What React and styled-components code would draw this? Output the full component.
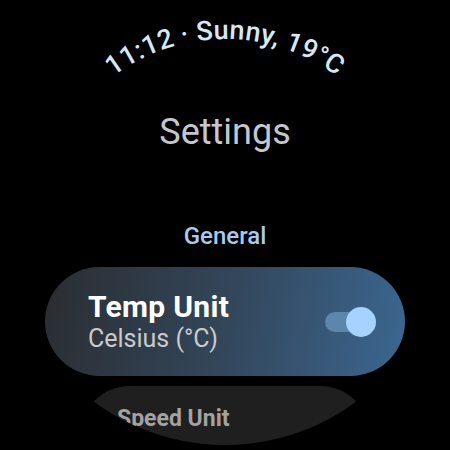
import React from "react";
import styled, { createGlobalStyle } from "styled-components";

const Global = createGlobalStyle`
  html, body { margin: 0; padding: 0; background: #000; }
  body { font-family: Roboto, "Liberation Sans", sans-serif; }
`;

const Watch = styled.div`
  width: 450px;
  height: 450px;
  background: #000;
  clip-path: circle(220px at 50% 50%);
  display: flex;
  flex-direction: column;
  align-items: center;
  overflow: hidden;
`;

const CurvedHeader = styled.svg`
  display: block;
  width: 450px;
  height: 100px;
  flex: none;
`;

const Title = styled.h1`
  margin: 11px 0 0;
  font-size: 36px;
  line-height: 42px;
  font-weight: 400;
  color: #c4c7cd;
`;

const SectionLabel = styled.div`
  margin-top: 69px;
  font-size: 24px;
  line-height: 28px;
  font-weight: 500;
  color: #a8c9f0;
`;

const Chip = styled.div`
  flex: none;
  box-sizing: border-box;
  margin-top: ${(p) => p.$gap}px;
  width: ${(p) => p.$width}px;
  height: ${(p) => p.$height}px;
  border-radius: ${(p) => p.$height / 2}px;
  background: ${(p) => p.$bg};
  display: flex;
  align-items: ${(p) => (p.$top ? "flex-start" : "center")};
  padding: ${(p) => p.$pad};
`;

const Labels = styled.div`
  flex: 1;
  display: flex;
  flex-direction: column;
`;

const ChipTitle = styled.div`
  font-size: ${(p) => p.$size}px;
  line-height: ${(p) => p.$lh}px;
  font-weight: 700;
  letter-spacing: ${(p) => p.$ls || 0}px;
  color: ${(p) => p.$color};
  white-space: nowrap;
`;

const ChipSub = styled.div`
  font-size: 25px;
  line-height: 29px;
  font-weight: 400;
  color: #c9cacc;
`;

const Toggle = styled.div`
  position: relative;
  width: 51px;
  height: 30px;
  flex: none;
  display: flex;
  align-items: center;
`;

const Track = styled.div`
  width: 45px;
  height: 20px;
  border-radius: 10px;
  background: #5c86ab;
`;

const Thumb = styled.div`
  position: absolute;
  right: 0;
  top: 0;
  width: 30px;
  height: 30px;
  border-radius: 50%;
  background: #a6d2ff;
`;

export default function App() {
  const R = 186;
  const cx = 225;
  const cy = 225;
  const arc = `M ${cx - R} ${cy} A ${R} ${R} 0 0 1 ${cx + R} ${cy}`;
  return (
    <>
      <Global />
      <Watch>
        <CurvedHeader viewBox="0 0 450 100">
          <defs>
            <path id="hdrArc" d={arc} />
          </defs>
          <text
            fill="#d9e7f5"
            fontSize="27"
            fontWeight="500"
            letterSpacing="0.3"
            fontFamily="Roboto, 'Liberation Sans', sans-serif"
            textAnchor="middle"
          >
            <textPath href="#hdrArc" startOffset="50%">
              11:12 · Sunny, 19°C
            </textPath>
          </text>
        </CurvedHeader>
        <Title>Settings</Title>
        <SectionLabel>General</SectionLabel>
        <Chip
          $gap={17}
          $width={360}
          $height={109}
          $bg="linear-gradient(100deg, #2a2d31 0%, #33465a 50%, #3b6791 100%)"
          $pad="0 29px 0 43px"
        >
          <Labels>
            <ChipTitle $size={30} $lh={34} $ls={0.3} $color="#ffffff">Temp Unit</ChipTitle>
            <ChipSub>Celsius (°C)</ChipSub>
          </Labels>
          <Toggle>
            <Track />
            <Thumb />
          </Toggle>
        </Chip>
        <Chip
          $gap={10}
          $width={290}
          $height={100}
          $bg="#1f1f1f"
          $pad="20px 30px 0 37px"
          $top
        >
          <ChipTitle $size={23} $lh={26} $color="#a3a3a3">Speed Unit</ChipTitle>
        </Chip>
      </Watch>
    </>
  );
}
